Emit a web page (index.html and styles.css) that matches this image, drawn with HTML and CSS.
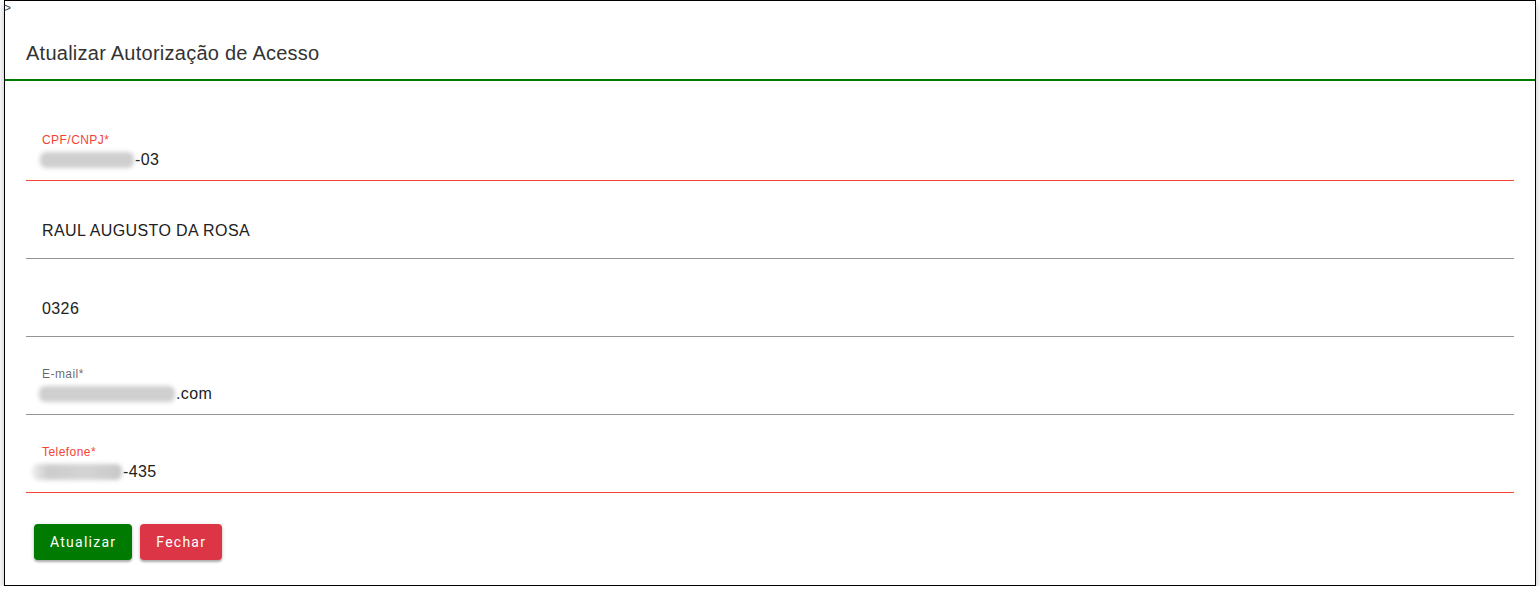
FILE: index.html
```html
<!DOCTYPE html>
<html lang="pt-BR">

<head>
    <meta charset="UTF-8">
    <meta name="viewport" content="width=device-width, initial-scale=1.0">
    <title>Atualizar Autorização de Acesso</title>
    <link rel="stylesheet" href="styles.css">
</head>

<body>
    <div class="dialog">
        <div class="stray">&gt;</div>
        <div class="dialog-header">
            <h2>Atualizar Autorização de Acesso</h2>
        </div>

        <form class="dialog-form">
            <div class="field field-labeled field-invalid">
                <label>CPF/CNPJ*</label>
                <div class="field-value"><span class="redacted redacted-cpf"></span>-03</div>
            </div>
            <div class="field">
                <div class="field-value">RAUL AUGUSTO DA ROSA</div>
            </div>
            <div class="field">
                <div class="field-value">0326</div>
            </div>
            <div class="field field-labeled">
                <label>E-mail*</label>
                <div class="field-value"><span class="redacted redacted-email"></span>.com</div>
            </div>
            <div class="field field-labeled field-invalid">
                <label>Telefone*</label>
                <div class="field-value"><span class="redacted redacted-phone"></span>-435</div>
            </div>

            <div class="actions">
                <button type="button" class="btn btn-success">Atualizar</button>
                <button type="button" class="btn btn-danger">Fechar</button>
            </div>
        </form>
    </div>
</body>

</html>
```

FILE: styles.css
```css
body {
    margin: 0;
    padding: 0 4px;
    background: #fff;
    font-family: 'Liberation Sans', Arial, sans-serif;
    color: rgba(0, 0, 0, 0.87);
}

.dialog {
    width: 1530px;
    height: 584px;
    border: 1px solid #000;
    background: #fff;
    box-shadow: 0 4px 8px rgba(0, 0, 0, 0.25);
}

.stray {
    font-family: 'Liberation Sans', Arial, sans-serif;
    font-size: 12px;
    line-height: 15px;
    height: 12px;
    margin-left: -1px;
    color: #444;
}

.dialog-header {
    padding: 28px 21px 14px;
    border-bottom: 2px solid #007a00;
}

.dialog-header h2 {
    margin: 0;
    font-family: 'Liberation Sans', Arial, sans-serif;
    font-size: 20px;
    line-height: 24px;
    font-weight: normal;
    letter-spacing: 0.25px;
    color: #333;
}

.dialog-form {
    padding: 22px 21px 0;
}

.field {
    border-bottom: 1px solid #949494;
    display: flex;
    flex-direction: column;
    justify-content: flex-end;
    padding: 40px 16px 17px;
}

.field label {
    font-size: 12px;
    line-height: 14px;
    letter-spacing: 0.45px;
    color: rgba(0, 0, 0, 0.6);
    margin-bottom: 3px;
}

.field-value {
    height: 20px;
    font-size: 16px;
    line-height: 20px;
    letter-spacing: 0.4px;
    color: #212121;
    white-space: nowrap;
}

.field-labeled {
    padding-top: 30px;
    padding-bottom: 10px;
}

.field-invalid {
    border-bottom-color: #f44336;
}

.field-invalid label {
    color: #f44336;
}

.redacted {
    display: inline-block;
    height: 16px;
    vertical-align: -3px;
    background: #cfcfcf;
    border-radius: 6px;
    filter: blur(2px);
}

.redacted-cpf {
    width: 94px;
    margin-left: -2px;
    margin-right: 1px;
}

.redacted-email {
    width: 136px;
    margin-left: -3px;
    margin-right: 1px;
}

.redacted-phone {
    width: 90px;
    margin-left: -10px;
    margin-right: 1px;
    background: linear-gradient(to right, #eee, #cccccc 18%, #d4d4d4 60%, #c8c8c8);
}

.actions {
    display: flex;
    gap: 8px;
    padding: 31px 8px 0;
}

.btn {
    height: 36px;
    padding: 0 16px;
    border: none;
    border-radius: 4px;
    font-family: Roboto, sans-serif;
    font-size: 14px;
    font-weight: 400;
    letter-spacing: 1.25px;
    color: #fff;
    cursor: pointer;
    box-shadow: 0 2px 2px rgba(0, 0, 0, 0.24), 0 1px 4px rgba(0, 0, 0, 0.16);
}

.btn-success {
    background-color: #007a00;
}

.btn-danger {
    background-color: #dc3545;
}
```
